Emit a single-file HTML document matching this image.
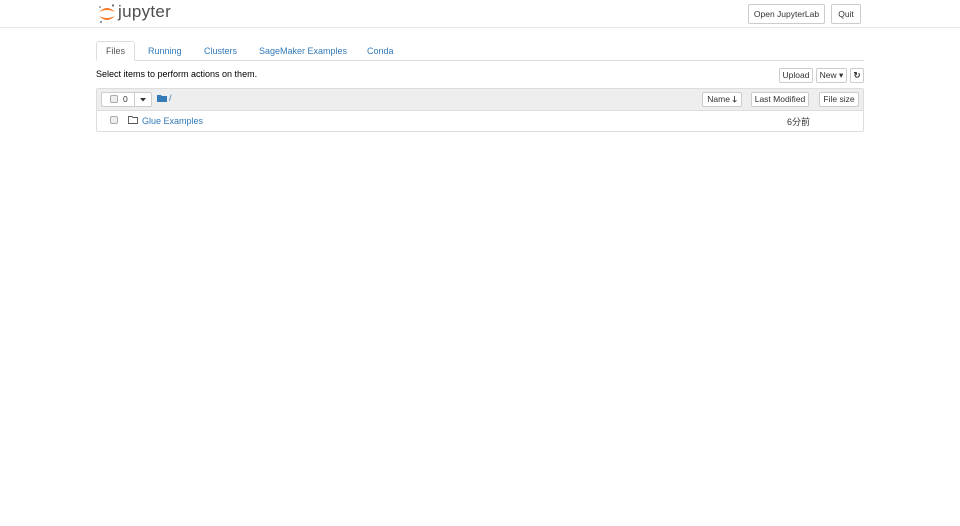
<!DOCTYPE html>
<html><head><meta charset="utf-8">
<style>
body{margin:0;width:960px;height:526px;background:#fff;font-family:"Liberation Sans","Noto Sans CJK JP",sans-serif;font-size:9px;color:#000;position:relative;overflow:hidden}
.abs{position:absolute}
.btn{position:absolute;border:1px solid #ccc;background:#fff;border-radius:2px;box-sizing:border-box;color:#333;text-align:center;font-size:8.5px}
a{color:#337ab7;text-decoration:none}
.chk{position:absolute;width:8px;height:8px;border:1px solid #aaa;border-radius:2px;background:#eee;box-sizing:border-box}
</style></head><body>
<svg class="abs" style="left:97px;top:3px" width="20" height="20" viewBox="0 0 20 20">
<path d="M2 9 Q10 1 18 9 Q10 5 2 9Z" fill="#f37726"/>
<path d="M2 13 Q10 21 18 13 Q10 17 2 13Z" fill="#f37726"/>
<circle cx="16" cy="2.5" r="1.2" fill="#767677"/><circle cx="3" cy="4" r="0.9" fill="#767677"/><circle cx="4" cy="19" r="1" fill="#767677"/>
</svg>
<div class="abs" style="left:118px;top:2px;font-size:17px;color:#4e4e4e;letter-spacing:0.3px">jupyter</div>
<div class="btn" style="left:748px;top:4px;width:77px;height:20px;line-height:18px">Open JupyterLab</div>
<div class="btn" style="left:831px;top:4px;width:30px;height:20px;line-height:18px">Quit</div>
<div class="abs" style="left:0;top:27px;width:960px;height:1px;background:#e7e7e7"></div>
<div class="abs" style="left:96px;top:60px;width:768px;height:1px;background:#ddd"></div>
<div class="abs" style="left:96px;top:41px;width:39px;height:20px;border:1px solid #ddd;border-bottom-color:#fff;border-radius:3px 3px 0 0;box-sizing:border-box;background:#fff;text-align:center;line-height:18px;color:#555">Files</div>
<a class="abs" style="left:148px;top:46px">Running</a>
<a class="abs" style="left:204px;top:46px">Clusters</a>
<a class="abs" style="left:259px;top:46px">SageMaker Examples</a>
<a class="abs" style="left:367px;top:46px">Conda</a>
<div class="abs" style="left:96px;top:69px">Select items to perform actions on them.</div>
<div class="btn" style="left:779px;top:68px;width:34px;height:15px;line-height:13px">Upload</div>
<div class="btn" style="left:816px;top:68px;width:31px;height:15px;line-height:13px">New ▾</div>
<div class="btn" style="left:850px;top:68px;width:14px;height:15px;line-height:13px;font-weight:bold">↻</div>
<div class="abs" style="left:96px;top:88px;width:768px;height:44px;border:1px solid #ddd;box-sizing:border-box;border-radius:2px"></div>
<div class="abs" style="left:97px;top:89px;width:766px;height:21px;background:#eee;border-bottom:1px solid #ddd"></div>
<div class="btn" style="left:101px;top:92px;width:51px;height:15px;background:#fff"></div>
<div class="abs" style="left:134px;top:92px;width:1px;height:15px;background:#ccc"></div>
<div class="chk" style="left:110px;top:95px"></div>
<div class="abs" style="left:123px;top:94px;font-size:8.5px;color:#333">0</div>
<svg class="abs" style="left:140px;top:98px" width="7" height="4"><path d="M0 0h6l-3 3.5z" fill="#333"/></svg>
<svg class="abs" style="left:157px;top:94px" width="10" height="8"><path d="M0 1h4l1 1h5v6H0z" fill="#337ab7"/></svg>
<div class="abs" style="left:169px;top:93px;color:#337ab7">/</div>
<div class="btn" style="left:702px;top:92px;width:40px;height:15px;line-height:13px">Name <b>🡓</b></div>
<div class="btn" style="left:751px;top:92px;width:58px;height:15px;line-height:13px">Last Modified</div>
<div class="btn" style="left:819px;top:92px;width:40px;height:15px;line-height:13px">File size</div>
<div class="chk" style="left:110px;top:116px"></div>
<svg class="abs" style="left:128px;top:116px" width="10" height="8"><path d="M0.5 0.5h3.5l1 1h4.5v6H0.5z" fill="none" stroke="#555" stroke-width="0.9"/></svg>
<a class="abs" style="left:142px;top:115.5px">Glue Examples</a>
<div class="abs" style="left:787px;top:115px;color:#333">6分前</div>
</body></html>
